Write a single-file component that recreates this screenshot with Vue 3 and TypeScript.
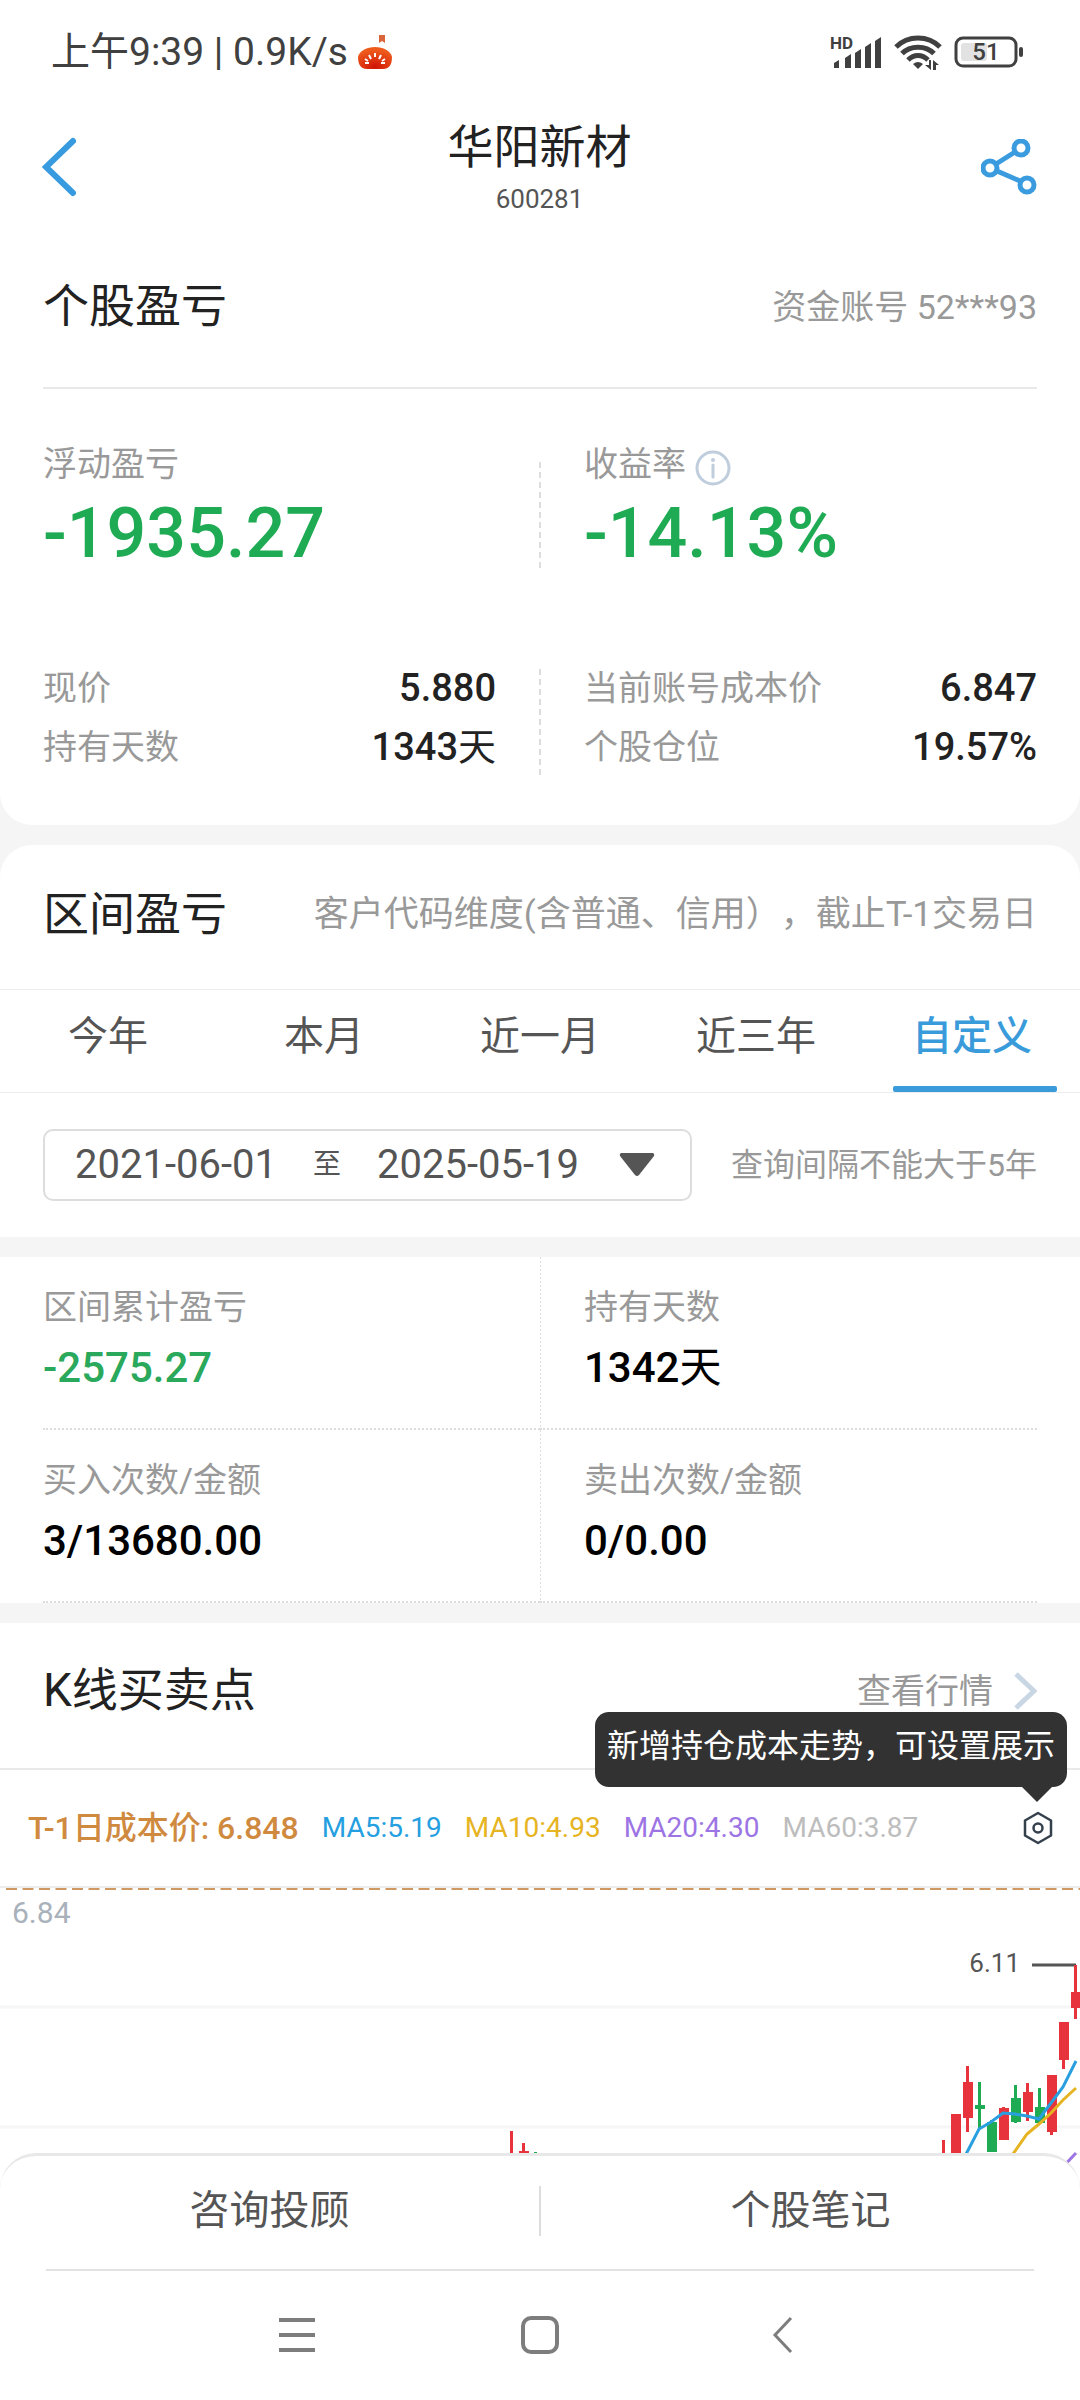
<script setup lang="ts">
import { ref } from 'vue'

interface Stat {
  label: string
  value: string
  unit?: string
  down?: boolean
}

interface Candle {
  x: number
  top: number
  bottom: number
  high: number
  low: number
  up: boolean
}

const tabs: string[] = ['今年', '本月', '近一月', '近三年', '自定义']
const activeTab = ref<string>('自定义')

const leftRows: Stat[] = [
  { label: '现价', value: '5.880' },
  { label: '持有天数', value: '1343', unit: '天' },
]
const rightRows: Stat[] = [
  { label: '当前账号成本价', value: '6.847' },
  { label: '个股仓位', value: '19.57%' },
]

const periodStats: Stat[] = [
  { label: '区间累计盈亏', value: '-2575.27', down: true },
  { label: '持有天数', value: '1342', unit: '天' },
  { label: '买入次数/金额', value: '3/13680.00' },
  { label: '卖出次数/金额', value: '0/0.00' },
]

const averages = [
  { text: 'MA5:5.19', tone: 'blue' },
  { text: 'MA10:4.93', tone: 'yellow' },
  { text: 'MA20:4.30', tone: 'purple' },
  { text: 'MA60:3.87', tone: 'grey' },
]

const candles: Candle[] = [
  { x: 511, top: 265, bottom: 290, high: 245, low: 290, up: true },
  { x: 523, top: 265, bottom: 268, high: 257, low: 290, up: true },
  { x: 535, top: 267, bottom: 290, high: 266, low: 290, up: false },
  { x: 943, top: 280, bottom: 290, high: 254, low: 290, up: true },
  { x: 955, top: 228, bottom: 290, high: 228, low: 290, up: true },
  { x: 967, top: 196, bottom: 232, high: 180, low: 246, up: true },
  { x: 979, top: 219, bottom: 223, high: 196, low: 242, up: false },
  { x: 991, top: 236, bottom: 266, high: 234, low: 266, up: false },
  { x: 1003, top: 222, bottom: 254, high: 221, low: 254, up: true },
  { x: 1015, top: 212, bottom: 236, high: 199, low: 237, up: false },
  { x: 1027, top: 206, bottom: 226, high: 197, low: 235, up: true },
  { x: 1039, top: 221, bottom: 237, high: 202, low: 237, up: false },
  { x: 1051, top: 189, bottom: 246, high: 189, low: 249, up: true },
  { x: 1063, top: 136, bottom: 174, high: 136, low: 183, up: true },
  { x: 1075, top: 106, bottom: 122, high: 79, low: 133, up: true },
]
</script>

<template>
  <div class="page">
    <section class="card account">
      <div class="status">
        <span class="clock">上午9:39 | 0.9K/s</span>
        <svg class="app-mark" viewBox="0 0 34 34" width="34" height="34">
          <defs>
            <radialGradient id="mark" cx="50%" cy="90%" r="75%">
              <stop offset="0" stop-color="#d01505" />
              <stop offset="1" stop-color="#ee5a1c" />
            </radialGradient>
          </defs>
          <path d="M21 0h6v8l-3-2-3 2z" fill="#d9643a" />
          <path d="M0 22C1 16 9 12 17 12s16 4 17 10c0 8-3 12-9 12H9c-6 0-9-4-9-12z" fill="url(#mark)" />
          <path d="M17 18v4M11 20l2 4M23 20l-2 4M7 24l3 2M27 24l-3 2M7 28h4M27 28h-4" stroke="#fff" stroke-width="2" />
        </svg>
        <div class="status-icons">
          <div class="signal">
            <span class="hd">HD</span>
            <svg viewBox="0 0 50 34" width="50" height="34">
              <path
                d="M2 33v-5l5-3v8zM13 33v-10l6-4v14zM23 33v-15l6-4v19zM33 33v-21l6-4v25zM43 33v-27l6-4v31z"
                fill="#404040"
              />
            </svg>
          </div>
          <svg viewBox="0 0 48 36" width="48" height="36">
            <g fill="none" stroke="#404040" stroke-width="5">
              <path d="M2 13C14 1 34 1 46 13" />
              <path d="M8 19.500C16 11 32 11 40 19.500" />
              <path d="M14 26c6-6 14-6 20 0" />
            </g>
            <path d="M19 30q5-4 10 0l-5 5z" fill="#404040" />
            <path d="M37 26v10l-6-5h4v-5zM39 36V26l6 5h-3v5z" fill="#404040" />
          </svg>
          <svg viewBox="0 0 70 32" width="70" height="32">
            <rect x="2" y="2" width="60" height="28" rx="7" fill="none" stroke="#404040" stroke-width="3" />
            <rect x="7" y="7" width="26" height="18" rx="3" fill="#e2e2e2" />
            <rect x="65" y="11" width="4" height="10" rx="2" fill="#404040" />
            <text x="32" y="24" text-anchor="middle" class="charge">51</text>
          </svg>
        </div>
      </div>

      <header class="header">
        <button class="icon-button back" type="button" aria-label="返回">
          <svg viewBox="0 0 34 60" width="34" height="60">
            <path d="M31 4L4 30l27 26" fill="none" stroke="#389be0" stroke-width="6" stroke-linecap="round" />
          </svg>
        </button>
        <div class="heading">
          <h1>华阳新材</h1>
          <p>600281</p>
        </div>
        <button class="icon-button" type="button" aria-label="分享">
          <svg viewBox="0 0 56 56" width="56" height="56">
            <g fill="none" stroke="#3a9bdf" stroke-width="5">
              <circle cx="9" cy="29" r="7" />
              <circle cx="40" cy="9" r="7" />
              <circle cx="46" cy="46" r="7" />
              <path d="M15 25L34 13M16 32l23 10" />
            </g>
          </svg>
        </button>
      </header>

      <div class="title-row account-title">
        <h2>个股盈亏</h2>
        <span class="note">资金账号 52***93</span>
      </div>

      <div class="split headline">
        <dl>
          <dt>浮动盈亏</dt>
          <dd class="big">-1935.27</dd>
        </dl>
        <i class="rule"></i>
        <dl>
          <dt>
            收益率
            <button class="icon-button info" type="button" aria-label="收益率说明">
              <svg viewBox="0 0 36 36" width="36" height="36">
                <circle cx="18" cy="18" r="16" fill="none" stroke="#bfcddc" stroke-width="3" />
                <circle cx="18" cy="10" r="2" fill="#bfcddc" />
                <path d="M18 15v12" stroke="#bfcddc" stroke-width="3" stroke-linecap="round" />
              </svg>
            </button>
          </dt>
          <dd class="big">-14.13%</dd>
        </dl>
      </div>

      <div class="split details">
        <dl>
          <div v-for="row in leftRows" :key="row.label" class="pair">
            <dt>{{ row.label }}</dt>
            <dd>{{ row.value }}<span v-if="row.unit">{{ row.unit }}</span></dd>
          </div>
        </dl>
        <i class="rule"></i>
        <dl>
          <div v-for="row in rightRows" :key="row.label" class="pair">
            <dt>{{ row.label }}</dt>
            <dd>{{ row.value }}<span v-if="row.unit">{{ row.unit }}</span></dd>
          </div>
        </dl>
      </div>
    </section>

    <section class="card period">
      <div class="title-row period-title">
        <h2>区间盈亏</h2>
        <span class="note">客户代码维度(含普通、信用），截止T-1交易日</span>
      </div>
      <nav class="tabs">
        <button
          v-for="tab in tabs"
          :key="tab"
          type="button"
          :class="{ active: tab === activeTab }"
          @click="activeTab = tab"
        >
          {{ tab }}
        </button>
      </nav>
      <div class="filter">
        <button class="range" type="button">
          <span>2021-06-01</span>
          <small>至</small>
          <span>2025-05-19</span>
          <svg viewBox="0 0 40 24" width="40" height="24">
            <path d="M6 0h32q2 1 1 3L24 22q-2 2-4 0L5 3q-1-2 1-3z" fill="#555" />
          </svg>
        </button>
        <span class="hint">查询间隔不能大于5年</span>
      </div>
    </section>

    <section class="stats">
      <dl>
        <div v-for="stat in periodStats" :key="stat.label" class="stat">
          <dt>{{ stat.label }}</dt>
          <dd :class="{ down: stat.down }">{{ stat.value }}<span v-if="stat.unit">{{ stat.unit }}</span></dd>
        </div>
      </dl>
    </section>

    <section class="kline">
      <div class="title-row kline-title">
        <h2>K线买卖点</h2>
        <a href="#quote" class="note more">
          查看行情
          <svg viewBox="0 0 24 38" width="24" height="38">
            <path d="M3 2l18 17L3 36" fill="none" stroke="#c9d6e3" stroke-width="5" />
          </svg>
        </a>
      </div>

      <div class="legend">
        <strong>T-1日成本价: 6.848</strong>
        <span v-for="avg in averages" :key="avg.text" :class="avg.tone">{{ avg.text }}</span>
        <button class="icon-button settings" type="button" aria-label="设置">
          <svg viewBox="0 0 32 34" width="32" height="34">
            <g fill="none" stroke="#34404c" stroke-width="2.500" stroke-linejoin="round">
              <path d="M16 2l13 7.500v15L16 32 3 24.500v-15z" />
              <circle cx="16" cy="17" r="4.500" />
            </g>
          </svg>
        </button>
        <div class="tooltip" role="tooltip">新增持仓成本走势，可设置展示</div>
      </div>

      <svg class="chart" viewBox="0 0 1080 300">
        <path d="M0 1h1080" stroke="#ececec" stroke-width="2" />
        <path d="M0 121h1080M0 241h1080" stroke="#f6f6f6" stroke-width="3" />
        <path d="M6 3h1074" stroke="#d09862" stroke-width="2" stroke-dasharray="11 5.500" />
        <text x="12" y="37" class="axis">6.84</text>
        <text x="1020" y="86" text-anchor="end" class="peak">6.11</text>
        <path d="M1032 79h44" stroke="#555" stroke-width="3" />
        <g v-for="c in candles" :key="c.x" :class="c.up ? 'rise' : 'fall'">
          <rect :x="c.x - 1" :y="c.high" width="3" :height="c.low - c.high" />
          <rect v-if="c.x !== 511 && c.x !== 943" :x="c.x - 4" :y="c.top" width="10" :height="c.bottom - c.top" />
        </g>
        <g fill="none" stroke-width="3">
          <path d="M962 276L979 243L991 236L1003 227L1015 228L1027 230L1039 233L1051 217L1063 201L1076 175" stroke="#2a9fe0" />
          <path d="M1008 275L1027 248L1039 238L1051 227L1063 214L1076 202" stroke="#e6b422" />
          <path d="M1060 284L1076 267" stroke="#9d74e4" />
        </g>
      </svg>
    </section>

    <footer class="footer">
      <div class="actions">
        <button type="button">咨询投顾</button>
        <i></i>
        <button type="button">个股笔记</button>
      </div>
      <div class="system">
        <button class="icon-button" type="button" aria-label="菜单">
          <svg viewBox="0 0 40 40" width="40" height="40">
            <path d="M2 5h36M2 20h36M2 35h36" stroke="#7d7d7d" stroke-width="4" />
          </svg>
        </button>
        <button class="icon-button" type="button" aria-label="主屏幕">
          <svg viewBox="0 0 40 40" width="40" height="40">
            <rect x="3" y="3" width="34" height="34" rx="8" fill="none" stroke="#7d7d7d" stroke-width="4" />
          </svg>
        </button>
        <button class="icon-button" type="button" aria-label="后退">
          <svg viewBox="0 0 40 40" width="40" height="40">
            <path d="M28 3L12 20l16 17" fill="none" stroke="#7d7d7d" stroke-width="3" />
          </svg>
        </button>
      </div>
    </footer>
  </div>
</template>

<style>
body {
  margin: 0;
  background: #f5f5f5;
}
</style>

<style scoped>
.page {
  display: flex;
  flex-direction: column;
  min-height: 100vh;
  background: #f5f5f5;
  color: #222;
  font-family: Roboto, 'Noto Sans CJK SC', sans-serif;
  font-size: 34px;
  line-height: 44px;
}

h1,
h2,
p,
dl,
dd {
  margin: 0;
}

button {
  padding: 0;
  border: 0;
  background: none;
  color: inherit;
  font: inherit;
}

svg {
  display: block;
}

.icon-button {
  display: flex;
}

.card {
  background: #fff;
}

.account {
  padding-bottom: 48px;
  border-radius: 0 0 32px 32px;
}

.status {
  display: flex;
  align-items: center;
  height: 104px;
  padding: 0 56px 0 51px;
  color: #404040;
}

.clock {
  font-size: 39px;
}

.app-mark {
  margin-left: 10px;
}

.status-icons {
  display: flex;
  align-items: center;
  gap: 12px;
  margin-left: auto;
}

.signal {
  position: relative;
}

.hd {
  position: absolute;
  top: -2px;
  left: -2px;
  font-size: 17px;
  font-weight: 700;
  line-height: 20px;
}

.charge {
  fill: #404040;
  font-size: 24px;
  font-weight: 500;
}

.header {
  display: flex;
  align-items: center;
  justify-content: space-between;
  height: 126px;
  padding: 0 43px 0 42px;
}

.back {
  width: 56px;
}

.heading {
  text-align: center;
}

h1,
h2 {
  font-size: 46px;
  font-weight: 400;
  line-height: 54px;
}

.heading p {
  margin-top: 9px;
  color: #555;
  font-size: 26px;
  line-height: 32px;
}

.title-row {
  display: flex;
  align-items: center;
  justify-content: space-between;
  padding: 0 43px;
}

.account-title {
  height: 151px;
  margin: 0 43px;
  padding: 0 0 6px;
  border-bottom: 2px solid #e9e9e9;
}

.note,
dt,
.hint {
  color: #999;
}

.note {
  padding-top: 2px;
}

.period-title .note {
  font-size: 35px;
  text-spacing-trim: space-all;
}

.split {
  display: grid;
  grid-template-columns: 1fr 2px 1fr;
  column-gap: 43px;
  padding: 0 43px;
}

.rule {
  align-self: end;
  height: 108px;
  margin-bottom: 5px;
  background: repeating-linear-gradient(#ddd 0 6px, transparent 6px 10px);
}

.headline {
  padding-top: 53px;
}

.headline dt {
  display: flex;
  gap: 9px;
}

.info {
  padding-top: 8px;
  height: 36px;
}

.big {
  margin-top: 5px;
  color: #1fab54;
  font-size: 70px;
  font-weight: 500;
  line-height: 84px;
}

.details {
  margin-top: 84px;
}

.details .rule {
  margin-bottom: 0;
}

.pair {
  display: flex;
  justify-content: space-between;
  line-height: 59px;
}

.pair dd {
  font-size: 38px;
  font-weight: 500;
}

dd span {
  font-weight: 400;
}

.period {
  margin-top: 20px;
  border-radius: 32px 32px 0 0;
}

.period-title {
  height: 138px;
  padding-bottom: 6px;
  border-bottom: 1px solid #ededed;
}

.tabs {
  display: flex;
  border-bottom: 1px solid #ededed;
}

.tabs button {
  position: relative;
  flex: 1;
  height: 102px;
  padding-bottom: 8px;
  color: #555;
  font-size: 40px;
}

.tabs .active {
  color: #3a9bdb;
  font-weight: 500;
}

.tabs .active::after {
  content: '';
  position: absolute;
  right: 23px;
  bottom: 0;
  left: 29px;
  height: 6px;
  border-radius: 2px;
  background: #3a9bdb;
}

.filter {
  display: flex;
  align-items: center;
  justify-content: space-between;
  padding: 36px 43px;
}

.range {
  display: flex;
  align-items: center;
  gap: 36px;
  height: 72px;
  padding: 0 35px 0 30px;
  border: 2px solid #ddd;
  border-radius: 10px;
  color: #555;
  font-size: 40px;
}

.range small {
  font-size: 28px;
}

.hint {
  font-size: 32px;
}

.stats {
  margin-top: 20px;
  padding: 0 43px;
  background: #fff;
}

.stats dl {
  display: grid;
  grid-template-columns: 1fr 1fr;
}

.stat {
  height: 143px;
  padding-top: 28px;
  border-bottom: 2px dotted #ddd;
}

.stat:nth-child(even) {
  padding-left: 44px;
  background: repeating-linear-gradient(#ddd 0 2px, transparent 2px 4px) left / 1px 100% no-repeat;
}

.stat dd {
  margin-top: 11px;
  color: #000;
  font-size: 42px;
  font-weight: 500;
  line-height: 56px;
}

.stat .down {
  color: #2aa85b;
}

.kline {
  margin-top: 20px;
  background: #fff;
}

.kline-title {
  height: 133px;
  padding-bottom: 12px;
  border-bottom: 2px solid #e9e9e9;
}

.more {
  display: flex;
  align-items: center;
  gap: 20px;
  text-decoration: none;
}

.legend {
  position: relative;
  display: flex;
  align-items: center;
  gap: 23px;
  height: 116px;
  padding: 0 26px 0 28px;
  font-size: 28px;
}

.legend strong {
  color: #d08a40;
  font-size: 32px;
  font-weight: 500;
}

.blue {
  color: #259fdf;
}

.yellow {
  color: #e6b422;
}

.purple {
  color: #9d74e4;
}

.grey {
  color: #bdbdbd;
}

.settings {
  margin-left: auto;
}

.tooltip {
  position: absolute;
  top: -58px;
  right: 13px;
  padding: 12px 12px 19px;
  border-radius: 14px;
  background: #323232;
  color: #fff;
  font-size: 32px;
}

.tooltip::after {
  content: '';
  position: absolute;
  top: 100%;
  right: 15px;
  border: 15px solid transparent;
  border-top-color: #323232;
  border-bottom: 0;
}

.chart {
  width: 100%;
  height: auto;
}

.axis {
  fill: #a9b1bb;
  font-size: 30px;
}

.peak {
  fill: #555;
  font-size: 26px;
}

.rise {
  fill: #e7343c;
}

.fall {
  fill: #1fab54;
}

.footer {
  position: relative;
  flex: 1;
  margin-top: -33px;
  border-top: 3px solid #e8e8e8;
  border-radius: 36px 36px 0 0;
  background: #fff;
}

.actions {
  display: flex;
  align-items: center;
  height: 109px;
  padding-bottom: 4px;
}

.actions button {
  flex: 1;
  height: 104px;
  color: #555;
  font-size: 40px;
}

.actions i {
  width: 2px;
  height: 50px;
  background: #ddd;
}

.system {
  display: flex;
  justify-content: space-around;
  margin: 0 46px;
  padding: 44px 12%;
  border-top: 2px solid #e2e2e2;
}
</style>
